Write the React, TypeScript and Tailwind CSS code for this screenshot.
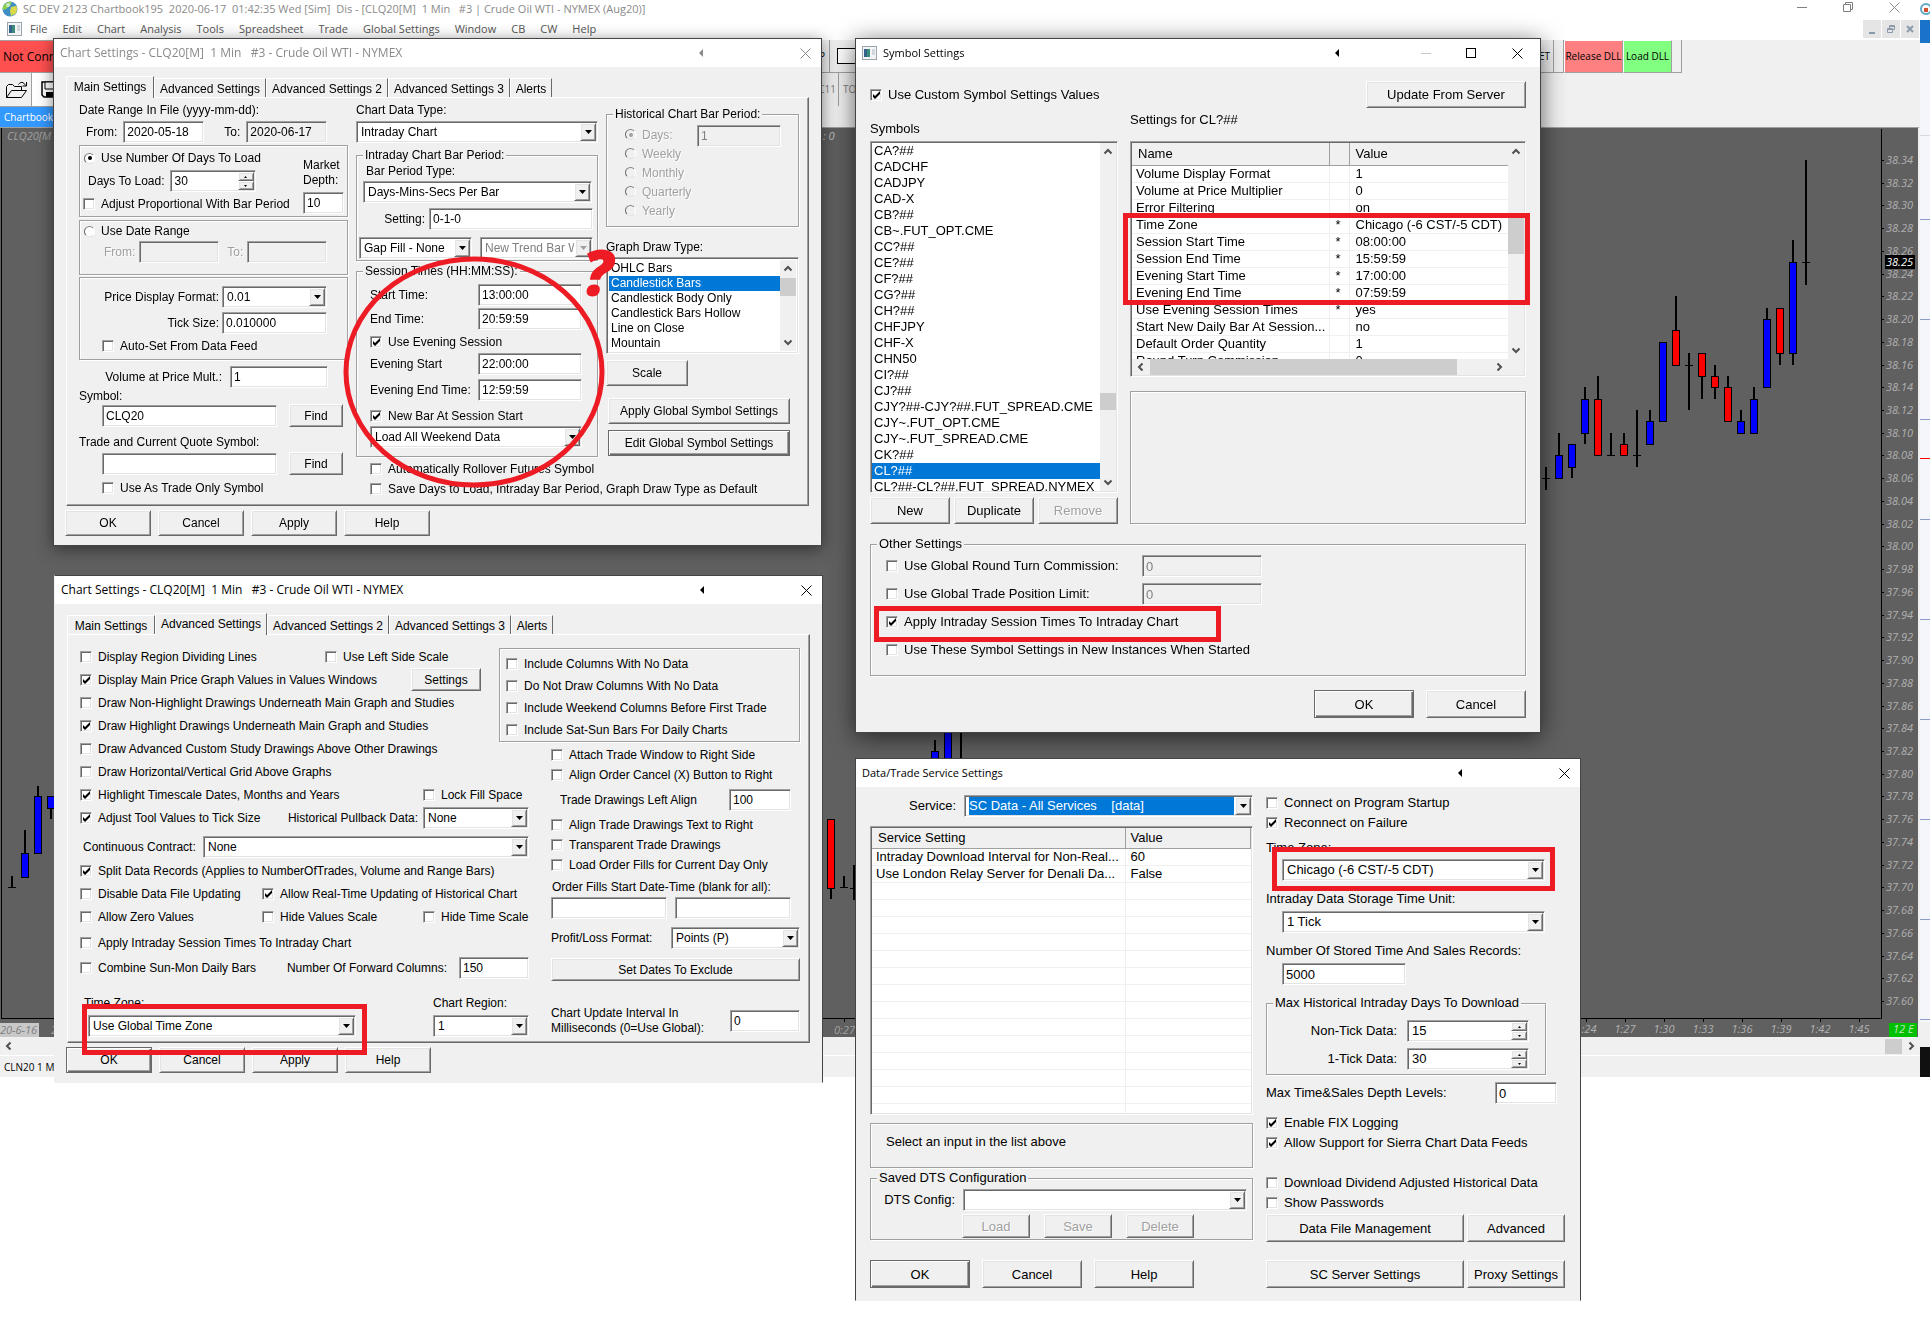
import type { ReactNode } from 'react';
import { clsx } from 'clsx';

const SUNKEN =
  'border border-t-[#a0a0a0] border-l-[#a0a0a0] border-b-white border-r-white shadow-[inset_1px_1px_0_#696969,inset_-1px_-1px_0_#e3e3e3]';
const RAISED =
  'border border-t-white border-l-white border-b-[#696969] border-r-[#696969] shadow-[inset_1px_1px_0_#e3e3e3,inset_-1px_-1px_0_#a0a0a0]';
const ETCHED = 'border border-[#a0a0a0] shadow-[1px_1px_0_#fff,inset_1px_1px_0_#fff]';
const UI_FONT = "font-['Open_Sans','Noto_Sans',sans-serif]";

/* ---------- form controls ---------- */

function Check({ label, checked, className }: { label: string; checked?: boolean; className?: string }) {
  return (
    <label className={clsx('flex items-center gap-[6px] shrink-0 whitespace-nowrap', className)}>
      <span className="grid shrink-0">
        <input
          type="checkbox"
          defaultChecked={checked}
          className={clsx('peer col-start-1 row-start-1 w-3 h-3 appearance-none bg-white', SUNKEN)}
        />
        <svg
          viewBox="0 0 12 12"
          className="hidden peer-checked:block col-start-1 row-start-1 w-3 h-3 pointer-events-none"
        >
          <path d="M3 5v3l2 2 5-5V2L5 7z" fill="#000" />
        </svg>
      </span>
      {label}
    </label>
  );
}

interface RadioProps {
  label: string;
  name: string;
  checked?: boolean;
  disabled?: boolean;
  className?: string;
}

function Radio({ label, name, checked, disabled, className }: RadioProps) {
  return (
    <label
      className={clsx(
        'flex items-center gap-[6px] whitespace-nowrap',
        disabled && 'text-[#a0a0a0] [text-shadow:1px_1px_0_#fff]',
        className,
      )}
    >
      <span className="grid shrink-0">
        <input
          type="radio"
          name={name}
          defaultChecked={checked}
          disabled={disabled}
          className={clsx(
            'peer col-start-1 row-start-1 w-[11px] h-[11px] appearance-none rounded-full border border-t-[#808080] border-l-[#696969] border-b-[#e3e3e3] border-r-white',
            disabled ? 'bg-[#f0f0f0]' : 'bg-white',
          )}
        />
        <span
          className={clsx(
            'hidden peer-checked:block col-start-1 row-start-1 place-self-center w-1 h-1 rounded-full pointer-events-none',
            disabled ? 'bg-[#a0a0a0]' : 'bg-black',
          )}
        />
      </span>
      {label}
    </label>
  );
}

interface FieldProps {
  label?: string;
  name?: string;
  value?: string;
  disabled?: boolean;
  readOnly?: boolean;
  className?: string;
  box: string;
}

function Field({ label, name, value = '', disabled, readOnly, className, box }: FieldProps) {
  return (
    <label className={clsx('flex items-center shrink-0 whitespace-nowrap', className)}>
      {label && <span className={clsx(disabled && 'text-[#a0a0a0] [text-shadow:1px_1px_0_#fff]')}>{label}</span>}
      <input
        type="text"
        aria-label={name}
        defaultValue={value}
        disabled={disabled}
        readOnly={readOnly}
        className={clsx(
          'h-[22px] px-[3px] shrink-0',
          SUNKEN,
          disabled || readOnly ? 'bg-[#f0f0f0]' : 'bg-white',
          disabled && 'text-[#808080]',
          box,
        )}
      />
    </label>
  );
}

function Triangle({ className }: { className?: string }) {
  return (
    <svg viewBox="0 0 7 4" className={clsx('w-[7px] h-1', className)}>
      <path d="M0 0h7L3.5 4z" fill="currentColor" />
    </svg>
  );
}

interface DropProps {
  label?: string;
  name?: string;
  value?: string;
  disabled?: boolean;
  active?: boolean;
  className?: string;
  box: string;
}

function Drop({ label, name, value = '', disabled, active, className, box }: DropProps) {
  return (
    <label className={clsx('flex items-center shrink-0 whitespace-nowrap', className)}>
      {label && <span>{label}</span>}
      <span className={clsx('relative block h-[22px] px-[2px] py-px shrink-0 bg-white', SUNKEN, box)}>
        <select
          aria-label={name}
          disabled={disabled}
          className={clsx(
            'block w-full h-[18px] leading-[18px] pl-[2px] pr-4 appearance-none bg-clip-content opacity-100',
            disabled && 'text-[#808080]',
            active && 'bg-[#0078d7] bg-clip-border text-white',
          )}
        >
          <option>{value}</option>
        </select>
        <span
          className={clsx(
            'absolute right-px top-px bottom-px w-4 flex items-center justify-center bg-[#f0f0f0] pointer-events-none',
            RAISED,
            disabled && 'text-[#a0a0a0]',
          )}
        >
          <Triangle />
        </span>
      </span>
    </label>
  );
}

function Spin({ label, value, className, box }: { label: string; value: string; className?: string; box: string }) {
  return (
    <div className={clsx('flex items-center shrink-0 whitespace-nowrap', className)}>
      <label className="contents">
        <span>{label}</span>
        <span className={clsx('flex h-[22px] p-px bg-white', SUNKEN, box)}>
          <input type="text" defaultValue={value} className="flex-1 min-w-0 px-[2px] ml-px bg-transparent" />
          <span className="flex flex-col w-4">
            <button type="button" aria-label="Increase" className={clsx('flex-1 flex items-center justify-center bg-[#f0f0f0]', RAISED)}>
              <svg viewBox="0 0 3 2" className="w-[3px] h-[2px]"><path d="M1.5 0L3 2H0z" /></svg>
            </button>
            <button type="button" aria-label="Decrease" className={clsx('flex-1 flex items-center justify-center bg-[#f0f0f0]', RAISED)}>
              <svg viewBox="0 0 3 2" className="w-[3px] h-[2px]"><path d="M0 0h3L1.5 2z" /></svg>
            </button>
          </span>
        </span>
      </label>
    </div>
  );
}

interface BtnProps {
  children: ReactNode;
  className?: string;
  primary?: boolean;
  disabled?: boolean;
}

function Btn({ children, className, primary, disabled }: BtnProps) {
  return (
    <button
      type="button"
      disabled={disabled}
      className={clsx(
        'shrink-0 bg-[#f0f0f0] whitespace-nowrap leading-none',
        primary
          ? 'border border-[#696969] shadow-[inset_1px_1px_0_#fff,inset_-1px_-1px_0_#696969,inset_-2px_-2px_0_#a0a0a0]'
          : RAISED,
        disabled && 'text-[#a0a0a0] [text-shadow:1px_1px_0_#fff]',
        className,
      )}
    >
      {children}
    </button>
  );
}

interface GroupProps {
  title: string;
  children: ReactNode;
  className?: string;
  inner?: string;
}

function Group({ title, children, className, inner }: GroupProps) {
  return (
    <fieldset className={clsx('min-w-0', ETCHED, className)}>
      <legend className="ml-[6px] px-[2px] h-4 leading-4 bg-[#f0f0f0] whitespace-nowrap">{title}</legend>
      <div className={inner}>{children}</div>
    </fieldset>
  );
}

function Chevron({ dir }: { dir: 'up' | 'down' | 'left' | 'right' }) {
  const d = {
    up: 'M1.500 6.500L5 3l3.500 3.500',
    down: 'M1.500 3.500L5 7l3.500-3.500',
    left: 'M6.500 1.500L3 5l3.500 3.500',
    right: 'M3.500 1.500L7 5 3.500 8.500',
  }[dir];
  return (
    <svg viewBox="0 0 10 10" className="w-[10px] h-[10px] shrink-0">
      <path d={d} fill="none" stroke="#505050" strokeWidth="2" />
    </svg>
  );
}

function VScroll({ thumb, className }: { thumb: string; className?: string }) {
  return (
    <div className={clsx('flex flex-col items-center justify-between shrink-0 w-4 py-1 bg-[#f0f0f0]', className)}>
      <Chevron dir="up" />
      <div className="flex-1 w-full my-1">
        <div className={clsx('w-full bg-[#cdcdcd]', thumb)} />
      </div>
      <Chevron dir="down" />
    </div>
  );
}

/* ---------- window chrome ---------- */

function CloseIcon() {
  return (
    <svg viewBox="0 0 11 11" className="w-[11px] h-[11px]">
      <path d="M.5.5l10 10M10.5.5l-10 10" stroke="currentColor" fill="none" />
    </svg>
  );
}

function AppIcon() {
  return (
    <svg viewBox="0 0 15 14" className="w-[15px] h-[14px] shrink-0">
      <rect x=".5" y=".5" width="14" height="13" fill="#f4f4f4" stroke="#9aa5b0" />
      <rect x="2" y="3" width="6" height="8" fill="#3a8a7a" />
      <rect x="2" y="3" width="3" height="8" fill="#35608c" />
      <rect x="10" y="3" width="3" height="6" fill="#cfd8dc" />
    </svg>
  );
}

interface WindowProps {
  title: string;
  children: ReactNode;
  className: string;
  inactive?: boolean;
  icon?: boolean;
  sizable?: boolean;
  large?: boolean;
}

function Window({ title, children, className, inactive, icon, sizable, large }: WindowProps) {
  return (
    <section
      className={clsx(
        "absolute flex flex-col bg-[#f0f0f0] border border-[#444] font-['Liberation_Sans',Arial,sans-serif] text-black",
        className,
      )}
    >
      <header
        className={clsx(
          'flex items-center h-7 pl-[6px] bg-white',
          UI_FONT,
          inactive ? 'text-[#8a8a8a]' : 'text-black',
          large ? 'text-[12px]' : 'text-[11px]',
        )}
      >
        {icon && <span className="mr-[6px]"><AppIcon /></span>}
        <h2 className="flex-1 whitespace-pre">{title}</h2>
        <svg viewBox="0 0 4 8" className={clsx('w-1 h-2', sizable ? 'mr-[82px]' : 'mr-[97px]')}>
          <path d="M4 0v8L0 4z" fill="currentColor" />
        </svg>
        {sizable && (
          <>
            <button type="button" aria-label="Minimize" className="w-[10px] h-px mr-[35px] bg-[#c8c8c8]" />
            <button type="button" aria-label="Maximize" className="w-[10px] h-[10px] mr-[36px] border border-black" />
          </>
        )}
        <button type="button" aria-label="Close" className={sizable ? 'mr-[17px]' : 'mr-[10px]'}>
          <CloseIcon />
        </button>
      </header>
      {children}
    </section>
  );
}

const TABS = ['Main Settings', 'Advanced Settings', 'Advanced Settings 2', 'Advanced Settings 3', 'Alerts'];
const TAB_WIDTHS = ['w-[88px]', 'w-[112px]', 'w-[122px]', 'w-[122px]', 'w-[42px]'];

function TabPanel({ active, children }: { active: number; children: ReactNode }) {
  return (
    <div className="px-3 pt-[9px] pb-[9px] text-[12px]">
      <div role="tablist" className="flex items-end">
        {TABS.map((tab, i) => (
          <button
            key={tab}
            type="button"
            role="tab"
            aria-selected={i === active}
            className={clsx(
              'border-t border-l border-r border-t-white border-l-white border-r-[#696969] whitespace-nowrap leading-none',
              TAB_WIDTHS[i],
              i === active ? 'relative h-[22px] -mb-px pb-[2px] bg-[#f0f0f0]' : 'h-[19px] pt-px',
            )}
          >
            {tab}
          </button>
        ))}
      </div>
      <div className="border border-t-white border-l-white border-b-[#696969] border-r-[#696969] shadow-[inset_-1px_-1px_0_#a0a0a0] pl-3 pb-[6px] flex">
        {children}
      </div>
      <div className="flex gap-[7px] mt-1 -ml-px">
        <Btn className="w-[86px] h-[26px]" primary={active === 1}>OK</Btn>
        <Btn className="w-[86px] h-[26px]">Cancel</Btn>
        <Btn className="w-[86px] h-[26px]">Apply</Btn>
        <Btn className="w-[86px] h-[26px]">Help</Btn>
      </div>
    </div>
  );
}

/* ---------- chart settings: main tab ---------- */

const DRAW_TYPES = ['OHLC Bars', 'Candlestick Bars', 'Candlestick Body Only', 'Candlestick Bars Hollow', 'Line on Close', 'Mountain'];

function MainSettings() {
  return (
    <TabPanel active={0}>
      <div className="w-[269px] pt-1">
        <p className="h-4 leading-4">Date Range In File (yyyy-mm-dd):</p>
        <div className="flex mt-[3px] pl-[7px] gap-5">
          <Field label="From:" value="2020-05-18" className="gap-[6px]" box="w-[81px]" />
          <Field label="To:" value="2020-06-17" readOnly className="gap-[6px]" box="w-[81px]" />
        </div>
        <div className={clsx('flex justify-between mt-[2px] pl-[3px] pr-[3px]', ETCHED)}>
          <div>
            <Radio name="range" label="Use Number Of Days To Load" checked className="h-6 pl-px" />
            <Spin label="Days To Load:" value="30" className="pl-[5px] gap-[5px]" box="w-[86px]" />
            <Check label="Adjust Proportional With Bar Period" className="h-6" />
          </div>
          <label className="flex flex-col pt-3 leading-[15px]">
            <span>Market</span>
            <span>Depth:</span>
            <input type="text" defaultValue="10" className={clsx('w-[41px] h-[22px] px-[3px] mt-1 bg-white', SUNKEN)} />
          </label>
        </div>
        <div className={clsx('mt-[3px] pl-1 pb-[11px]', ETCHED)}>
          <Radio name="range" label="Use Date Range" className="h-5" />
          <div className="flex pl-5 gap-2">
            <Field label="From:" disabled className="gap-1" box="w-[80px]" />
            <Field label="To:" disabled className="gap-1" box="w-[80px]" />
          </div>
        </div>
        <div className={clsx('mt-[2px] pt-2 pb-[3px] pr-5', ETCHED)}>
          <Drop label="Price Display Format:" value="0.01" className="justify-end gap-[3px]" box="w-[105px]" />
          <Field label="Tick Size:" value="0.010000" className="justify-end gap-[3px] mt-1" box="w-[105px]" />
          <Check label="Auto-Set From Data Feed" className="h-5 mt-[2px] pl-[22px]" />
        </div>
        <Field label="Volume at Price Mult.:" value="1" className="justify-end gap-2 mt-[6px] pr-5" box="w-[98px]" />
        <p className="h-4 leading-4">Symbol:</p>
        <div className="flex pl-[23px] gap-3">
          <Field name="Symbol" value="CLQ20" box="w-[175px]" />
          <Btn className="w-[54px] h-[23px]">Find</Btn>
        </div>
        <p className="h-4 leading-4 mt-[7px]">Trade and Current Quote Symbol:</p>
        <div className="flex mt-[2px] pl-[23px] gap-3">
          <Field name="Trade and Current Quote Symbol" box="w-[175px]" />
          <Btn className="w-[54px] h-[23px]">Find</Btn>
        </div>
        <Check label="Use As Trade Only Symbol" className="h-5 mt-[3px] pl-[23px]" />
      </div>

      <div className="w-[242px] ml-2 pt-1">
        <p className="h-4 leading-4">Chart Data Type:</p>
        <Drop name="Chart Data Type" value="Intraday Chart" className="mt-[3px]" box="w-full" />
        <Group title="Intraday Chart Bar Period:" className="mt-1" inner="pb-px">
          <p className="h-4 leading-4 pl-[9px]">Bar Period Type:</p>
          <Drop name="Bar Period Type" value="Days-Mins-Secs Per Bar" className="mt-[2px] pl-[6px]" box="w-[229px]" />
          <Field label="Setting:" value="0-1-0" className="justify-end gap-1 mt-[5px] pr-1" box="w-[164px]" />
          <div className="flex gap-2 mt-[7px] pl-[2px]">
            <Drop name="Gap Fill" value="Gap Fill - None" box="w-[113px]" />
            <Drop name="New Trend Bar" value="New Trend Bar W" disabled box="w-[113px] bg-[#f0f0f0]" />
          </div>
        </Group>
        <Group title="Session Times (HH:MM:SS):" className="mt-[2px]" inner="pb-2 pl-[13px] pr-[15px]">
          <Field label="Start Time:" value="13:00:00" className="justify-between mt-[5px]" box="w-[104px]" />
          <Field label="End Time:" value="20:59:59" className="justify-between mt-[2px]" box="w-[104px]" />
          <Check label="Use Evening Session" checked className="h-5 mt-[2px]" />
          <Field label="Evening Start" value="22:00:00" className="justify-between mt-px" box="w-[104px]" />
          <Field label="Evening End Time:" value="12:59:59" className="justify-between mt-1" box="w-[104px]" />
          <Check label="New Bar At Session Start" checked className="h-5 mt-[5px]" />
          <Drop name="Weekend Data" value="Load All Weekend Data" box="w-full" />
        </Group>
        <Check label="Automatically Rollover Futures Symbol" className="h-5 mt-[2px] pl-[14px]" />
        <Check label="Save Days to Load, Intraday Bar Period, Graph Draw Type as Default" className="h-5 pl-[14px]" />
      </div>

      <div className="w-[193px] ml-2 pt-2">
        <Group title="Historical Chart Bar Period:" inner="pb-[6px]">
          <div className="flex pl-[18px] pt-[3px]">
            <div className="w-[72px]">
              {['Days:', 'Weekly', 'Monthly', 'Quarterly', 'Yearly'].map((p, i) => (
                <Radio key={p} name="period" label={p} disabled checked={i === 0} className="h-[19px]" />
              ))}
            </div>
            <Field name="Days" value="1" disabled className="self-start" box="w-[84px]" />
          </div>
        </Group>
        <p className="h-4 leading-4 mt-3">Graph Draw Type:</p>
        <div className={clsx('flex h-[97px] mt-[2px] p-[2px] bg-white', SUNKEN)}>
          <ul role="listbox" aria-label="Graph Draw Type" className="flex-1 min-w-0 pt-px overflow-hidden">
            {DRAW_TYPES.map((t, i) => (
              <li
                key={t}
                role="option"
                aria-selected={i === 1}
                className={clsx('h-[15px] leading-[15px] px-[2px] whitespace-nowrap', i === 1 && 'bg-[#0078d7] text-white')}
              >
                {t}
              </li>
            ))}
          </ul>
          <VScroll thumb="h-[18px]" />
        </div>
        <Btn className="block w-[82px] h-[26px] mt-[6px]">Scale</Btn>
        <Btn className="block w-[182px] h-[26px] ml-[2px] mt-3">Apply Global Symbol Settings</Btn>
        <Btn primary className="block w-[182px] h-[26px] ml-[2px] mt-[6px]">Edit Global Symbol Settings</Btn>
      </div>
    </TabPanel>
  );
}

/* ---------- chart settings: advanced tab ---------- */

function AdvancedSettings() {
  return (
    <TabPanel active={1}>
      <div className="w-[449px] pt-[10px]">
        <div className="flex items-center h-[23px]">
          <Check label="Display Region Dividing Lines" className="w-[245px]" />
          <Check label="Use Left Side Scale" />
        </div>
        <div className="flex items-center justify-between h-[23px] pr-12">
          <Check label="Display Main Price Graph Values in Values Windows" checked />
          <Btn className="w-[70px] h-[23px]">Settings</Btn>
        </div>
        <Check label="Draw Non-Highlight Drawings Underneath Main Graph and Studies" className="h-[23px]" />
        <Check label="Draw Highlight Drawings Underneath Main Graph and Studies" checked className="h-[23px]" />
        <Check label="Draw Advanced Custom Study Drawings Above Other Drawings" className="h-[23px]" />
        <Check label="Draw Horizontal/Vertical Grid Above Graphs" className="h-[23px]" />
        <div className="flex items-center h-[23px]">
          <Check label="Highlight Timescale Dates, Months and Years" checked className="w-[343px]" />
          <Check label="Lock Fill Space" />
        </div>
        <div className="flex items-center justify-between h-[23px]">
          <Check label="Adjust Tool Values to Tick Size" checked />
          <Drop label="Historical Pullback Data:" value="None" className="gap-[5px]" box="w-[106px]" />
        </div>
        <Drop label="Continuous Contract:" value="None" className="h-[23px] mt-[6px] pl-[3px] justify-between" box="w-[326px]" />
        <Check label="Split Data Records (Applies to NumberOfTrades, Volume and Range Bars)" checked className="h-[23px] mt-px" />
        <div className="flex items-center h-[23px]">
          <Check label="Disable Data File Updating" className="w-[182px]" />
          <Check label="Allow Real-Time Updating of Historical Chart" checked />
        </div>
        <div className="flex items-center h-[23px]">
          <Check label="Allow Zero Values" className="w-[182px]" />
          <Check label="Hide Values Scale" className="w-[161px]" />
          <Check label="Hide Time Scale" />
        </div>
        <Check label="Apply Intraday Session Times To Intraday Chart" className="h-[23px] mt-[3px]" />
        <div className="flex items-center justify-between h-[23px] mt-[2px]">
          <Check label="Combine Sun-Mon Daily Bars" />
          <Field label="Number Of Forward Columns:" value="150" className="gap-3" box="w-[70px]" />
        </div>
        <div className="flex justify-between mt-4 -mb-px pl-1">
          <div>
            <p className="h-4 leading-4 mb-1">Time Zone:</p>
            <Drop name="Time Zone" value="Use Global Time Zone" className="pl-1" box="w-[268px]" />
          </div>
          <div>
            <p className="h-4 leading-4 mb-1">Chart Region:</p>
            <Drop name="Chart Region" value="1" box="w-[96px]" />
          </div>
        </div>
      </div>

      <div className="w-[249px] ml-[22px] pt-[13px]">
        <div className={clsx('-ml-[52px] pl-[6px] pt-1', ETCHED)}>
          <Check label="Include Columns With No Data" className="h-[22px]" />
          <Check label="Do Not Draw Columns With No Data" className="h-[22px]" />
          <Check label="Include Weekend Columns Before First Trade" className="h-[22px]" />
          <Check label="Include Sat-Sun Bars For Daily Charts" className="h-[22px]" />
        </div>
        <Check label="Attach Trade Window to Right Side" className="h-5 mt-[3px]" />
        <Check label="Align Order Cancel (X) Button to Right" className="h-5" />
        <Field label="Trade Drawings Left Align" value="100" className="justify-between mt-1 pl-[9px] pr-[9px]" box="w-[62px]" />
        <Check label="Align Trade Drawings Text to Right" className="h-5 mt-1" />
        <Check label="Transparent Trade Drawings" className="h-5" />
        <Check label="Load Order Fills for Current Day Only" className="h-5" />
        <p className="h-5 leading-5 mt-[2px] pl-px">Order Fills Start Date-Time (blank for all):</p>
        <div className="flex gap-2">
          <Field name="Order Fills Start Date" box="w-[116px]" />
          <Field name="Order Fills Start Time" box="w-[116px]" />
        </div>
        <Drop label="Profit/Loss Format:" value="Points (P)" className="justify-between mt-2" box="w-[129px]" />
        <Btn className="block w-full h-[23px] mt-[9px]">Set Dates To Exclude</Btn>
        <label className="flex items-center justify-between mt-[25px] leading-[15px]">
          <span>Chart Update Interval In<br />Milliseconds (0=Use Global):</span>
          <input type="text" defaultValue="0" className={clsx('w-[70px] h-[22px] px-[3px] bg-white', SUNKEN)} />
        </label>
      </div>
    </TabPanel>
  );
}

/* ---------- symbol settings ---------- */

const SYMBOLS = [
  'CA?##', 'CADCHF', 'CADJPY', 'CAD-X', 'CB?##', 'CB~.FUT_OPT.CME', 'CC?##', 'CE?##', 'CF?##', 'CG?##', 'CH?##',
  'CHFJPY', 'CHF-X', 'CHN50', 'CI?##', 'CJ?##', 'CJY?##-CJY?##.FUT_SPREAD.CME', 'CJY~.FUT_OPT.CME',
  'CJY~.FUT_SPREAD.CME', 'CK?##', 'CL?##', 'CL?##-CL?##.FUT_SPREAD.NYMEX',
];

const SYMBOL_ROWS = [
  ['Volume Display Format', '', '1'],
  ['Volume at Price Multiplier', '', '0'],
  ['Error Filtering', '', 'on'],
  ['Time Zone', '*', 'Chicago (-6 CST/-5 CDT)'],
  ['Session Start Time', '*', '08:00:00'],
  ['Session End Time', '*', '15:59:59'],
  ['Evening Start Time', '*', '17:00:00'],
  ['Evening End Time', '*', '07:59:59'],
  ['Use Evening Session Times', '*', 'yes'],
  ['Start New Daily Bar At Session...', '', 'no'],
  ['Default Order Quantity', '', '1'],
  ['Round Turn Commission', '', '0'],
];

function SymbolSettings() {
  return (
    <div className="px-[14px] py-[14px] text-[13px]">
      <div className="flex items-center justify-between">
        <Check label="Use Custom Symbol Settings Values" checked />
        <Btn className="w-[160px] h-[27px]">Update From Server</Btn>
      </div>
      <div className="flex gap-3">
        <div className="w-[248px] pt-[13px]">
          <p className="h-4 leading-4">Symbols</p>
          <div className={clsx('flex h-[352px] mt-1 p-px bg-white', SUNKEN)}>
            <ul role="listbox" aria-label="Symbols" className="flex-1 min-w-0 overflow-hidden">
              {SYMBOLS.map((s) => (
                <li
                  key={s}
                  role="option"
                  aria-selected={s === 'CL?##'}
                  className={clsx('h-4 leading-4 px-[2px] whitespace-nowrap', s === 'CL?##' && 'bg-[#0078d7] text-white')}
                >
                  {s}
                </li>
              ))}
            </ul>
            <VScroll thumb="h-[17px] mt-[232px]" />
          </div>
          <div className="flex gap-1 mt-1">
            <Btn className="w-[80px] h-[27px]">New</Btn>
            <Btn className="w-[80px] h-[27px]">Duplicate</Btn>
            <Btn disabled className="w-[80px] h-[27px]">Remove</Btn>
          </div>
        </div>
        <div className="flex-1 min-w-0 flex flex-col pt-1">
          <p className="h-4 leading-4">Settings for CL?##</p>
          <div className={clsx('flex flex-col h-[236px] mt-[13px] p-px bg-white', SUNKEN)}>
            <div className="flex flex-1 min-h-0">
              <div className="flex-1 min-w-0 overflow-hidden">
                <table className="w-full table-fixed border-collapse">
                  <thead>
                    <tr className="h-[22px] bg-[#f0f0f0] text-left">
                      <th className="w-[197px] pl-[6px] font-normal border-r border-b border-[#a0a0a0]">Name</th>
                      <th className="w-5 border-r border-b border-[#a0a0a0]" aria-label="Modified" />
                      <th className="pl-[6px] font-normal border-b border-[#a0a0a0]">Value</th>
                    </tr>
                  </thead>
                  <tbody className="whitespace-nowrap leading-4">
                    {SYMBOL_ROWS.map(([name, mark, value]) => (
                      <tr key={name} className="h-[17px] border-b border-[#f0f0f0]">
                        <td className="pl-1 border-r border-[#f0f0f0]">{name}</td>
                        <td className="pl-[6px] border-r border-[#f0f0f0]">{mark}</td>
                        <td className="pl-[6px]">{value}</td>
                      </tr>
                    ))}
                  </tbody>
                </table>
              </div>
              <VScroll thumb="h-[37px] mt-[56px]" />
            </div>
            <div className="flex items-center h-4 pr-5 pl-1 gap-1 bg-[#f0f0f0]">
              <Chevron dir="left" />
              <div className="flex-1 h-full">
                <div className="h-full w-[307px] bg-[#cdcdcd]" />
              </div>
              <Chevron dir="right" />
            </div>
          </div>
          <div className={clsx('flex-1 mt-[14px]', ETCHED)} />
        </div>
      </div>
      <Group title="Other Settings" className="mt-3" inner="pb-[11px] pl-[15px]">
        <div className="flex items-center h-7">
          <Check label="Use Global Round Turn Commission:" className="w-[256px]" />
          <Field name="Round turn commission" value="0" disabled box="w-[120px]" />
        </div>
        <div className="flex items-center h-7">
          <Check label="Use Global Trade Position Limit:" className="w-[256px]" />
          <Field name="Trade position limit" value="0" disabled box="w-[120px]" />
        </div>
        <Check label="Apply Intraday Session Times To Intraday Chart" checked className="h-7" />
        <Check label="Use These Symbol Settings in New Instances When Started" className="h-7" />
      </Group>
      <div className="flex justify-end gap-3 mt-[14px]">
        <Btn primary className="w-[100px] h-7">OK</Btn>
        <Btn className="w-[100px] h-7">Cancel</Btn>
      </div>
    </div>
  );
}

/* ---------- data / trade service settings ---------- */

const SERVICE_ROWS = [
  ['Intraday Download Interval for Non-Real...', '60'],
  ['Use London Relay Server for Denali Da...', 'False'],
  ...Array.from({ length: 14 }, () => ['', '']),
];

function ServiceSettings() {
  return (
    <div className="flex px-[14px] pb-3 gap-[13px] text-[13px]">
      <div className="w-[383px] pt-2">
        <Drop
          label="Service:"
          value={'SC Data - All Services\u00a0\u00a0\u00a0 [data]'}
          active
          className="justify-end gap-2"
          box="w-[289px]"
        />
        <div className={clsx('h-[289px] mt-[9px] p-px bg-white overflow-hidden', SUNKEN)}>
          <table className="w-full table-fixed border-collapse">
            <thead>
              <tr className="h-[19px] bg-[#f0f0f0] text-left">
                <th className="w-[253px] pl-[6px] font-normal border-r border-b border-[#a0a0a0]">Service Setting</th>
                <th className="pl-[5px] font-normal border-r border-b border-[#a0a0a0]">Value</th>
              </tr>
            </thead>
            <tbody className="whitespace-nowrap leading-4">
              {SERVICE_ROWS.map(([name, value], i) => (
                <tr key={i} className="h-[17px] border-b border-[#f0f0f0]">
                  <td className="pl-1 border-r border-[#f0f0f0]">{name}</td>
                  <td className="pl-[5px]">{value}</td>
                </tr>
              ))}
            </tbody>
          </table>
        </div>
        <div className={clsx('h-[45px] mt-2 px-[15px] pt-[10px] leading-4', ETCHED)}>Select an input in the list above</div>
        <Group title="Saved DTS Configuration" className="mt-[2px]" inner="pb-px">
          <Drop label="DTS Config:" className="justify-end gap-2 mt-[3px] pr-[5px]" box="w-[284px]" />
          <div className="flex gap-[14px] mt-[3px] pl-[91px]">
            <Btn disabled className="w-[68px] h-6">Load</Btn>
            <Btn disabled className="w-[68px] h-6">Save</Btn>
            <Btn disabled className="w-[68px] h-6">Delete</Btn>
          </div>
        </Group>
        <div className="flex gap-3 mt-5">
          <Btn primary className="w-[100px] h-7">OK</Btn>
          <Btn className="w-[100px] h-7">Cancel</Btn>
          <Btn className="w-[100px] h-7">Help</Btn>
        </div>
      </div>

      <div className="w-[299px] pt-[6px]">
        <Check label="Connect on Program Startup" className="h-5" />
        <Check label="Reconnect on Failure" checked className="h-5" />
        <p className="h-4 leading-4 mt-[7px]">Time Zone:</p>
        <Drop name="Time Zone" value="Chicago (-6 CST/-5 CDT)" className="mt-[3px] pl-4" box="w-[263px]" />
        <p className="h-4 leading-4 mt-[10px]">Intraday Data Storage Time Unit:</p>
        <Drop name="Intraday Data Storage Time Unit" value="1 Tick" className="mt-1 pl-4" box="w-[263px]" />
        <p className="h-4 leading-4 mt-[10px]">Number Of Stored Time And Sales Records:</p>
        <Field name="Number Of Stored Time And Sales Records" value="5000" className="mt-1 pl-4" box="w-[124px]" />
        <Group title="Max Historical Intraday Days To Download" className="w-[280px] mt-[10px]" inner="pb-1 pr-4">
          <Spin label="Non-Tick Data:" value="15" className="justify-end gap-[10px] mt-[9px]" box="w-[122px]" />
          <Spin label="1-Tick Data:" value="30" className="justify-end gap-[10px] mt-[6px]" box="w-[122px]" />
        </Group>
        <Field label="Max Time&Sales Depth Levels:" value="0" className="justify-between mt-[7px] pr-2" box="w-[62px]" />
        <Check label="Enable FIX Logging" checked className="h-5 mt-[9px]" />
        <Check label="Allow Support for Sierra Chart Data Feeds" checked className="h-5" />
        <Check label="Download Dividend Adjusted Historical Data" className="h-5 mt-5" />
        <Check label="Show Passwords" className="h-5" />
        <div className="flex justify-between mt-px">
          <Btn className="w-[198px] h-7">Data File Management</Btn>
          <Btn className="w-[98px] h-7">Advanced</Btn>
        </div>
        <div className="flex justify-between mt-[18px]">
          <Btn className="w-[198px] h-7">SC Server Settings</Btn>
          <Btn className="w-[98px] h-7">Proxy Settings</Btn>
        </div>
      </div>
    </div>
  );
}

/* ---------- chart ---------- */

type Bar = [open: number, close: number, high: number, low: number];

// Cents above 38.00, oldest first.
const BARS: Bar[] = [
  [6, 6, 7, 5], [6, 8, 10, 6], [7, 9, 9, 6], [10, 13, 14, 9], [13, 8, 15, 8], [8, 8, 10, 8], [9, 8, 10, 8],
  [8, 8, 12, 7], [9, 11, 12, 9], [11, 18, 18, 11], [19, 16, 22, 16], [16, 16, 17, 12], [17, 15, 17, 13],
  [15, 14, 16, 13], [14, 11, 15, 11], [10, 11, 12, 10], [10, 13, 14, 10], [14, 20, 21, 14], [21, 17, 21, 16],
  [17, 25, 27, 16], [25, 25, 34, 23],
];

const priceY = (cents: number) => Math.round(32 + (34 - cents) * 11.365);

function Candle({ x, top, bottom, high, low, color }: { x: number; top: number; bottom: number; high: number; low: number; color: string }) {
  return (
    <g>
      <rect x={x - 1} y={high} width="2" height={low - high} fill="#000" />
      {top === bottom ? (
        <rect x={x - 4} y={top} width="8" height="1" fill="#000" />
      ) : (
        <rect x={x - 3.5} y={top + 0.5} width="7" height={bottom - top} fill={color} stroke="#000" />
      )}
    </g>
  );
}

function Chart() {
  const prices = Array.from({ length: 38 }, (_, i) => 34 - i * 2);
  const times = ['1:24', '1:27', '1:30', '1:33', '1:36', '1:39', '1:42', '1:45'];
  return (
    <div className={clsx('h-[910px] bg-[#606060] border-t border-r-2 border-t-[#a0a0a0] border-r-[#f0f0f0] italic text-[11px]', UI_FONT)}>
      <svg className="block w-full h-full">
        <rect x="1" y="0" width="1" height="891" fill="#000" />
        <rect x="1" y="890" width="98%" height="1" fill="#000" />
        <text x="7" y="12" fill="#a0a0a0">CLQ20[M</text>
        <text x="823" y="12" fill="#c0c0c0">: 0</text>

        <Candle x={12} high={748} low={760} top={759} bottom={759} color="" />
        <Candle x={25} high={702} low={749} top={725} bottom={749} color="#00f" />
        <Candle x={38} high={658} low={725} top={668} bottom={725} color="#00f" />
        <Candle x={51} high={668} low={691} top={668} bottom={680} color="#00f" />
        <Candle x={831} high={691} low={771} top={691} bottom={760} color="#f00" />
        <Candle x={844} high={748} low={760} top={759} bottom={759} color="" />
        <Candle x={854} high={737} low={772} top={760} bottom={760} color="" />
        <Candle x={935} high={612} low={640} top={623} bottom={640} color="#00f" />
        <Candle x={948} high={590} low={640} top={600} bottom={640} color="#00f" />
        <Candle x={961} high={590} low={640} top={590} bottom={590} color="" />

        <rect x="0" y="895" width="39" height="14" fill="#c8c8c8" />
        <text x="0" y="906" fill="#808080">20-6-16</text>
        <text x="51" y="906" fill="#a0a0a0">2</text>
        <text x="834" y="906" fill="#a0a0a0">0:27</text>
        <rect x="844" y="891" width="1" height="3" fill="#000" />

        {/* everything below hangs off the right edge */}
        <svg x="100%" className="overflow-visible">
          <rect x="-37" y="0" width="37" height="909" fill="#606060" />
          <rect x="-37" y="1" width="1" height="890" fill="#000" />
          {prices.map((c) => (
            <g key={c}>
              <rect x="-36" y={priceY(c)} width="2" height="1" fill="#000" />
              <text x="-32" y={priceY(c) + 4} fill="#b0b0b0">{((3800 + c) / 100).toFixed(2)}</text>
            </g>
          ))}
          <rect x="-33" y={priceY(25) - 7} width="30" height="14" fill="#000" />
          <text x="-32" y={priceY(25) + 4} fill="#fff">38.25</text>
          {BARS.map(([open, close, high, low], i) => (
            <Candle
              key={i}
              x={-372 + i * 13}
              top={priceY(Math.max(open, close))}
              bottom={priceY(Math.min(open, close))}
              high={priceY(high)}
              low={priceY(low)}
              color={close > open ? '#00f' : '#f00'}
            />
          ))}
          {times.map((t, i) => (
            <g key={t}>
              <rect x={-332 + i * 39} y="891" width="1" height="3" fill="#000" />
              <text x={-332 + i * 39} y="905" textAnchor="middle" fill="#b0b0b0">{t}</text>
            </g>
          ))}
          <rect x="-29" y="895" width="28" height="14" fill="#00c000" />
          <text x="-25" y="905" fill="#c0e8c0">12 E</text>
        </svg>
      </svg>
    </div>
  );
}

/* ---------- main application frame ---------- */

const MENU = ['File', 'Edit', 'Chart', 'Analysis', 'Tools', 'Spreadsheet', 'Trade', 'Global Settings', 'Window', 'CB', 'CW', 'Help'];

function MainFrame() {
  return (
    <div className={clsx('mr-[10px]', UI_FONT)}>
      <header className="flex items-center h-[18px] pl-[2px] gap-[5px] text-[11px] text-[#8a8a8a]">
        <svg viewBox="0 0 16 16" className="w-4 h-4 shrink-0">
          <circle cx="8" cy="8" r="7.500" fill="#3f8fc4" />
          <path d="M2 4c2-3 6-4 8-3l-2 4-4 3-3 1c-1-1 0-4 1-5z" fill="#8fd14f" />
          <path d="M9 6l5-1c2 2 1 6-1 8l-4 2-1-5z" fill="#d9d94a" />
          <circle cx="6" cy="4" r="2" fill="#e8f7ff" opacity=".7" />
        </svg>
        <h1 className="flex-1 whitespace-pre">SC DEV 2123 Chartbook195  2020-06-17  01:42:35 Wed [Sim]  Dis - [CLQ20[M]  1 Min   #3 | Crude Oil WTI - NYMEX (Aug20)]</h1>
        <div className="flex items-center gap-9 pr-5 pb-1">
          <button type="button" aria-label="Minimize" className="w-[10px] h-px bg-[#808080]" />
          <button type="button" aria-label="Restore">
            <svg viewBox="0 0 10 10" className="w-[10px] h-[10px]">
              <path d="M.5 2.500h7v7h-7zM2.500 2.500v-2h7v7h-2" fill="none" stroke="#808080" />
            </svg>
          </button>
          <button type="button" aria-label="Close"><CloseIcon /></button>
        </div>
      </header>

      <nav className="flex items-center h-[22px] pl-[7px] pr-px text-[11px] text-[#555]">
        <AppIcon />
        <ul className="flex flex-1 pl-2 gap-[15px]">
          {MENU.map((m) => (
            <li key={m}><button type="button" className="whitespace-nowrap">{m}</button></li>
          ))}
        </ul>
        <div className="flex gap-px text-[#8c9bab]">
          <button type="button" aria-label="Minimize chart" className="flex items-end justify-center w-[18px] h-[18px] pb-1 bg-[#e5e5e5]">
            <span className="w-[6px] h-[2px] bg-[#8c9bab]" />
          </button>
          <button type="button" aria-label="Restore chart" className="flex items-center justify-center w-[18px] h-[18px] bg-[#e5e5e5]">
            <svg viewBox="0 0 8 8" className="w-2 h-2"><path d="M.5 3.500h5v4h-5zM.5 4.500h5M2.500 3V.500h5v4H6M2.500 1.500h5" fill="none" stroke="currentColor" /></svg>
          </button>
          <button type="button" aria-label="Close chart" className="flex items-center justify-center w-[18px] h-[18px] bg-[#e5e5e5]">
            <svg viewBox="0 0 8 8" className="w-2 h-2"><path d="M1 1l6 6M7 1L1 7" fill="none" stroke="currentColor" strokeWidth="2" /></svg>
          </button>
        </div>
      </nav>

      <div className="bg-[#f0f0f0] text-[10px] text-black">
        <div className="flex h-[33px]">
          <button type="button" className="w-[160px] pl-[3px] text-left text-[12px] bg-[#ff5050] border-y border-[#a0a0a0]">Not Connected</button>
          <div className="flex items-center w-[670px] justify-end pr-1 border-r border-b border-[#a0a0a0]">P</div>
          <div className="flex items-center w-[708px] pl-[7px] border-b border-[#a0a0a0]">
            <span className="w-9 h-4 border border-black bg-white" />
          </div>
          <div className="flex items-center w-4 justify-end pr-[3px] border-r border-b border-[#a0a0a0]">ET</div>
          <div className="w-[10px] border-r border-b border-[#a0a0a0]" />
          <button type="button" className="w-[59px] bg-[#ff8080] border border-white border-r-[#a0a0a0] border-b-[#a0a0a0]">Release DLL</button>
          <button type="button" className="w-[49px] bg-[#80ff80] border border-white border-r-[#a0a0a0] border-b-[#a0a0a0]">Load DLL</button>
          <div className="w-[10px] border-r border-b border-[#a0a0a0]" />
        </div>
        <div className="flex h-[33px]">
          <button type="button" aria-label="Open" className="flex items-center justify-center w-8 pl-[3px] border-r border-[#a0a0a0]">
            <svg viewBox="0 0 22 18" className="w-[22px] h-[18px]">
              <path d="M.5 16.500V5.500l2-2h4l2 2h7v4M.5 16.500l5-7h15l-5 7zM12.500 3.500c2-3 5-3 7 1M20.500 1v4h-4" fill="none" stroke="#000" />
            </svg>
          </button>
          <button type="button" aria-label="Save" className="flex items-center justify-center w-9 bg-white">
            <svg viewBox="0 0 18 17" className="w-[18px] h-[17px]">
              <path d="M1 1h16v15H3l-2-2z" fill="#fff" stroke="#000" strokeWidth="1.500" />
              <path d="M4 1h10v7H4z" fill="#fff" stroke="#000" />
              <path d="M5 11h9v5H5z" />
            </svg>
          </button>
          <div className="flex items-center w-[771px] justify-end pr-[2px] border-r border-[#a0a0a0] text-[#808080]">C11</div>
          <div className="flex items-center pl-1 text-[#808080]">TO</div>
        </div>
        <div className="flex h-[21px]">
          <button type="button" className="w-[120px] pl-1 text-left text-[10px] text-white bg-[#3399ff] border-t border-[#a0a0a0]">Chartbook195</button>
        </div>
      </div>

      <Chart />

      <div className="flex items-center h-[18px] px-1 bg-[#f0f0f0]">
        <Chevron dir="left" />
        <div className="flex-1" />
        <div className="w-[17px] h-[15px] mr-1 bg-[#cdcdcd]" />
        <Chevron dir="right" />
      </div>
      <footer className="h-[22px] pl-1 leading-[22px] text-[10px] text-black whitespace-nowrap bg-[#f0f0f0] border-t border-white">CLN20  1 Min</footer>
    </div>
  );
}

/* Sliver of the neighbouring window on the right edge. */
function EdgeStrip() {
  return (
    <svg className="absolute right-0 top-0 w-[10px] h-[1077px]">
      <rect width="10" height="1077" fill="#fff" />
      <rect y="43" width="10" height="1034" fill="#f5f6fc" />
      <circle cx="6" cy="9" r="5" fill="#fff" stroke="#5fa8c8" strokeWidth="2" />
      <rect x="4" y="8" width="4" height="4" fill="#d05030" />
      <rect y="20" width="10" height="23" fill="#1a73c8" />
      <rect y="135" width="10" height="1" fill="#d8d8e0" />
      {[219, 319, 419, 519, 619, 719, 819, 919, 1019].map((y) => (
        <rect key={y} y={y} width="10" height="1" fill="#8c9cc8" />
      ))}
      <rect y="458" width="10" height="1" fill="#f00" />
      <rect y="1022" width="10" height="25" fill="#f0f0f0" />
      <rect y="1047" width="10" height="30" fill="#101010" />
    </svg>
  );
}

function RedBox({ className }: { className: string }) {
  return <div className={clsx('absolute border-[5px] border-[#ed1c24] pointer-events-none', className)} />;
}

export default function App() {
  return (
    <main className="relative min-h-screen bg-white overflow-hidden">
      <MainFrame />
      <EdgeStrip />

      <Window title="Chart Settings - CLQ20[M]  1 Min   #3 - Crude Oil WTI - NYMEX" large inactive className="left-[53px] top-[38px] w-[769px] drop-shadow-[0_3px_8px_rgba(0,0,0,0.5)]">
        <MainSettings />
      </Window>
      <Window title="Chart Settings - CLQ20[M]  1 Min   #3 - Crude Oil WTI - NYMEX" large className="left-[54px] top-[575px] w-[769px] border-l-[#f0f0f0] border-b-[#f0f0f0]">
        <AdvancedSettings />
      </Window>
      <Window title="Symbol Settings" icon sizable className="left-[855px] top-[38px] w-[686px] drop-shadow-[0_4px_12px_rgba(0,0,0,0.6)]">
        <SymbolSettings />
      </Window>
      <Window title="Data/Trade Service Settings" className="left-[855px] top-[758px] w-[726px] border-b-[#f0f0f0]">
        <ServiceSettings />
      </Window>

      <svg className="absolute left-[340px] top-[254px] w-[268px] h-[236px] pointer-events-none">
        <ellipse cx="134" cy="118" rx="128" ry="113" fill="none" stroke="#ed1c24" strokeWidth="5" />
      </svg>
      <span className={clsx('absolute left-[582px] top-[240px] text-[64px] leading-[64px] font-extrabold italic text-[#ed1c24] pointer-events-none', UI_FONT)}>?</span>
      <RedBox className="left-[82px] top-[1004px] w-[285px] h-[51px]" />
      <RedBox className="left-[1123px] top-[213px] w-[407px] h-[92px]" />
      <RedBox className="left-[874px] top-[606px] w-[347px] h-[36px]" />
      <RedBox className="left-[1272px] top-[847px] w-[283px] h-[44px]" />
    </main>
  );
}
